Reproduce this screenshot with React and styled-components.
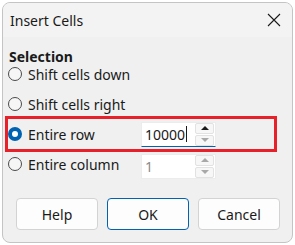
import React from 'react';
import styled, { createGlobalStyle } from 'styled-components';

const GlobalStyle = createGlobalStyle`
    html, body {
        margin: 0;
        padding: 0;
        background: #ffffff;
    }
    body {
        font-family: "Noto Sans", "Liberation Sans", sans-serif;
        font-size: 14px;
        color: #1a1a1a;
    }
`

const Window = styled.div`
    box-sizing: border-box;
    margin: 2px 0 0 2px;
    width: 291px;
    height: 241px;
    background: #f0f0f0;
    border: 1px solid #c4c4c4;
    border-radius: 8px;
    display: flex;
    flex-direction: column;
    overflow: hidden;
`

const TitleBar = styled.div`
    height: 34px;
    display: flex;
    align-items: center;
    justify-content: space-between;
    padding: 0 11px 0 7px;
    background: #f3f3f3;
`

const Title = styled.span`
    font-size: 14px;
    color: #1a1a1a;
`

const CloseButton = styled.button`
    border: none;
    background: none;
    padding: 0;
    width: 14px;
    height: 14px;
    display: flex;
    cursor: pointer;
`

const Body = styled.div`
    flex: 1;
    display: flex;
    flex-direction: column;
    padding: 10px 0 0 5px;
`

const Heading = styled.div`
    font-weight: bold;
    font-size: 14px;
    line-height: 20px;
    padding-left: 1px;
    margin-bottom: -8px;
`

const Row = styled.label`
    width: 266px;
    height: 30px;
    flex-shrink: 0;
    display: flex;
    align-items: center;
    outline: ${p => p.highlight ? '3px solid #e8202a' : 'none'};
`

const Radio = styled.span`
    box-sizing: border-box;
    width: 14px;
    height: 14px;
    border-radius: 50%;
    flex-shrink: 0;
    border: ${p => p.checked ? '4px solid #0062b1' : '1px solid #4a4a4a'};
    background: ${p => p.checked ? '#ffffff' : '#f6f6f6'};
    margin-right: 6px;
`

const LabelText = styled.span`
    width: 113px;
`

const Spin = styled.div`
    display: flex;
    height: 25px;
    width: 75px;
    background: #ffffff;
    border: 1px solid #ececec;
    border-bottom: 1px solid ${p => p.active ? '#0062b1' : '#ececec'};
    box-sizing: border-box;
    margin-top: ${p => p.shift || 0}px;
`

const SpinValue = styled.div`
    flex: 1;
    display: flex;
    align-items: center;
    padding-left: 3px;
    color: ${p => p.disabled ? '#8a8a8a' : '#1a1a1a'};
`

const Caret = styled.span`
    width: 1px;
    height: 16px;
    background: #1a1a1a;
    margin-left: 1px;
`

const SpinButtons = styled.div`
    width: 19px;
    display: flex;
    flex-direction: column;
    gap: 1px;
    margin-right: 1px;
`

const SpinButton = styled.div`
    flex: 1;
    display: flex;
    align-items: center;
    justify-content: center;
    background: #f7f7f7;
    border: 1px solid #e2e2e2;
    border-radius: 2px;
    box-sizing: border-box;
`

const Arrow = styled.span`
    width: 0;
    height: 0;
    border-left: 4px solid transparent;
    border-right: 4px solid transparent;
    ${p => p.down
        ? `border-top: 4px solid ${p.dim ? '#a8a8a8' : '#1a1a1a'};`
        : `border-bottom: 4px solid ${p.dim ? '#a8a8a8' : '#1a1a1a'};`}
`

const Footer = styled.div`
    display: flex;
    gap: 9px;
    padding: 0 0 12px 13px;
    margin-top: auto;
`

const Button = styled.button`
    width: 82px;
    height: 32px;
    font-family: inherit;
    font-size: 14px;
    color: #1a1a1a;
    background: #fdfdfd;
    border: 1px solid ${p => p.primary ? '#0062b1' : '#d3d3d3'};
    border-radius: 4px;
    cursor: pointer;
`

function SpinField({ value, active, disabled, upDim, downDim, shift }) {
    return (
        <Spin active={active} shift={shift}>
            <SpinValue disabled={disabled}>
                {value}
                {active && <Caret />}
            </SpinValue>
            <SpinButtons>
                <SpinButton><Arrow dim={upDim} /></SpinButton>
                <SpinButton><Arrow down dim={downDim} /></SpinButton>
            </SpinButtons>
        </Spin>
    )
}

export default function App() {
    return (
        <>
            <GlobalStyle />
            <Window>
                <TitleBar>
                    <Title>Insert Cells</Title>
                    <CloseButton aria-label="Close">
                        <svg width="14" height="14" viewBox="0 0 14 14">
                            <path d="M1 1 L13 13 M13 1 L1 13" stroke="#1a1a1a" strokeWidth="1.1" fill="none" />
                        </svg>
                    </CloseButton>
                </TitleBar>
                <Body>
                    <Heading>Selection</Heading>
                    <Row><Radio /><LabelText>Shift cells down</LabelText></Row>
                    <Row><Radio /><LabelText>Shift cells right</LabelText></Row>
                    <Row highlight>
                        <Radio checked /><LabelText>Entire row</LabelText>
                        <SpinField value="10000" active downDim />
                    </Row>
                    <Row>
                        <Radio /><LabelText>Entire column</LabelText>
                        <SpinField value="1" disabled upDim downDim shift={4} />
                    </Row>
                </Body>
                <Footer>
                    <Button>Help</Button>
                    <Button primary>OK</Button>
                    <Button>Cancel</Button>
                </Footer>
            </Window>
        </>
    )
}
